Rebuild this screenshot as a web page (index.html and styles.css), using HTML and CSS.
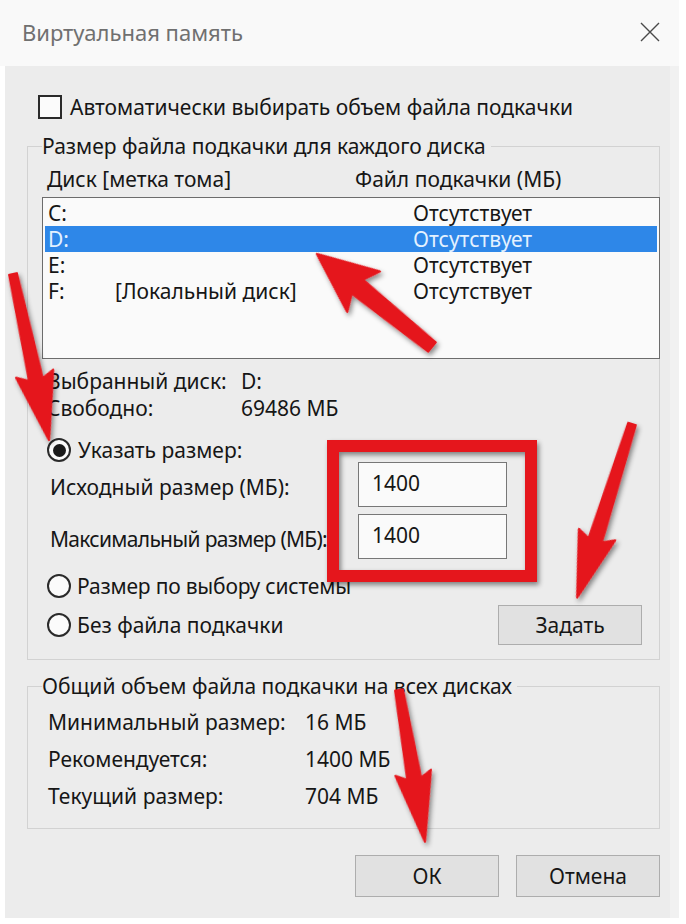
FILE: index.html
```html
<!DOCTYPE html>
<html lang="ru">
<head>
<meta charset="utf-8">
<title>Виртуальная память</title>
<link rel="stylesheet" href="styles.css">
</head>
<body>
<div class="dialog">
  <div class="titlebar">
    <span class="title">Виртуальная память</span>
    <svg class="close" width="20" height="20" viewBox="0 0 20 20"><path d="M1 1 L19 19 M19 1 L1 19" stroke="#4a4a4a" stroke-width="1.4" fill="none"/></svg>
  </div>
  <div class="content">
    <div class="auto"><span class="checkbox"></span><span>Автоматически выбирать объем файла подкачки</span></div>

    <div class="group g1">
      <div class="group-title">Размер файла подкачки для каждого диска</div>
      <div class="headers"><span class="h-disk">Диск [метка тома]</span><span>Файл подкачки (МБ)</span></div>
      <div class="listbox">
        <div class="row"><span class="c-letter">C:</span><span class="c-label"></span><span>Отсутствует</span></div>
        <div class="row selected"><span class="c-letter">D:</span><span class="c-label"></span><span>Отсутствует</span></div>
        <div class="row"><span class="c-letter">E:</span><span class="c-label"></span><span>Отсутствует</span></div>
        <div class="row"><span class="c-letter">F:</span><span class="c-label">[Локальный диск]</span><span>Отсутствует</span></div>
      </div>
      <div class="info">
        <div class="info-row"><span class="info-label">Выбранный диск:</span><span>D:</span></div>
        <div class="info-row"><span class="info-label">Свободно:</span><span>69486 МБ</span></div>
      </div>
      <div class="radio-row r1"><span class="radio on"></span><span>Указать размер:</span></div>
      <div class="field-row f1"><span class="field-label">Исходный размер (МБ):</span><div class="input">1400</div></div>
      <div class="field-row f2"><span class="field-label">Максимальный размер (МБ):</span><div class="input">1400</div></div>
      <div class="radio-row r2"><span class="radio"></span><span>Размер по выбору системы</span></div>
      <div class="radio-row r3"><span class="radio"></span><span class="grow">Без файла подкачки</span><button class="btn set">Задать</button></div>
    </div>

    <div class="group g2">
      <div class="group-title">Общий объем файла подкачки на всех дисках</div>
      <div class="totals">
        <div class="total-row"><span class="total-label">Минимальный размер:</span><span>16 МБ</span></div>
        <div class="total-row"><span class="total-label">Рекомендуется:</span><span>1400 МБ</span></div>
        <div class="total-row"><span class="total-label">Текущий размер:</span><span>704 МБ</span></div>
      </div>
    </div>

    <div class="actions"><button class="btn">ОК</button><button class="btn">Отмена</button></div>
  </div>
</div>

<svg class="annotations" width="686" height="924" viewBox="0 0 686 924">
  <defs>
    <filter id="sh" x="-20%" y="-20%" width="140%" height="140%">
      <feDropShadow dx="2" dy="3" stdDeviation="2.5" flood-color="#000" flood-opacity="0.45"/>
    </filter>
  </defs>
  <g fill="#e5141b" stroke="#e5141b" stroke-width="2" stroke-linejoin="round" filter="url(#sh)">
    <rect x="333" y="446" width="198" height="130" fill="none" stroke-width="12" stroke-linejoin="miter"/>
    <polygon transform="translate(432 347) rotate(-141.04)" points="0,-6 96,-9 88,-26 148,0 88,26 96,9 0,6"/>
    <polygon transform="translate(13 274) rotate(77.76)" points="0,-4 108,-7 102,-19 170,0 102,19 108,7 0,4"/>
    <polygon transform="translate(632 424) rotate(107.54)" points="0,-4 122,-7 116,-19 182,0 116,19 122,7 0,4"/>
    <polygon transform="translate(399 690) rotate(80.29)" points="0,-4 90,-7 84,-18 154,0 84,18 90,7 0,4"/>
  </g>
</svg>
</body>
</html>
```

FILE: styles.css
```css
* { box-sizing: border-box; }
html, body { margin: 0; padding: 0; }
body {
  background: #ffffff;
  width: 686px;
  height: 924px;
  position: relative;
  overflow: hidden;
  font-family: "Noto Sans", "Open Sans", sans-serif;
  font-size: 21px;
  color: #161616;
}
.dialog {
  margin-left: 5px;
  width: 674px;
  height: 918px;
  background: #ececec;
  border-right: 9px solid #f1f1f1;
  display: flex;
  flex-direction: column;
}
.titlebar {
  height: 66px;
  margin-left: -5px;
  margin-right: -9px;
  background: #f9f9f9;
  display: flex;
  align-items: center;
  justify-content: space-between;
  padding: 0 19px 2px 22px;
}
.title {
  color: #707070;
  font-size: 22px;
}
.close { display: block; }
.content {
  padding: 0 10px 0 22px;
  display: flex;
  flex-direction: column;
}
.auto {
  margin-top: 29px;
  height: 24px;
  display: flex;
  align-items: center;
  line-height: 24px;
}
.checkbox {
  width: 24px;
  height: 24px;
  margin-left: 11px;
  margin-right: 8px;
  border: 2px solid #2a2a2a;
  background: #fbfbfb;
  flex: none;
}
.group {
  border: 1px solid #d2d2d2;
  padding: 0 0 0 14px;
  display: flex;
  flex-direction: column;
}
.group-title {
  margin-top: -14px;
  align-self: flex-start;
  background: #ececec;
  line-height: 26px;
  height: 26px;
  padding-right: 5px;
}
.g1 { margin-top: 27px; height: 514px; }
.headers {
  margin-top: 7px;
  height: 26px;
  line-height: 26px;
  padding-left: 5px;
  display: flex;
}
.h-disk { width: 308px; }
.listbox {
  margin-top: 5px;
  margin-right: -1px;
  height: 162px;
  border: 1px solid #6c6c6c;
  background: #fafafa;
  padding: 2px;
}
.row {
  height: 26px;
  line-height: 26px;
  padding-left: 3px;
  display: flex;
}
.row.selected {
  background: #2e87e8;
  color: #e4f1ff;
}
.c-letter { width: 67px; }
.c-label { width: 298px; }
.info { margin-top: 9px; padding-left: 5px; }
.info-row { height: 27px; line-height: 27px; display: flex; }
.info-label { width: 194px; }
.radio-row {
  display: flex;
  align-items: center;
  padding-left: 5px;
}
.radio {
  width: 24px;
  height: 24px;
  border-radius: 50%;
  border: 2px solid #2a2a2a;
  background: #fbfbfb;
  margin-right: 6px;
  flex: none;
  display: flex;
  align-items: center;
  justify-content: center;
}
.radio.on::after {
  content: "";
  width: 13px;
  height: 13px;
  border-radius: 50%;
  background: #1a1a1a;
}
.r1 { margin-top: 16px; height: 24px; }
.r1 .radio { margin-right: 7px; }
.field-row {
  display: flex;
  align-items: center;
  padding-left: 8px;
  height: 45px;
}
.f2 { margin-top: 7px; }
.field-label { width: 308px; padding-top: 4px; white-space: nowrap; }
.f2 .field-label { letter-spacing: -0.7px; }
.input {
  width: 149px;
  height: 45px;
  border: 1px solid #777777;
  background: #fafafa;
  padding-left: 13px;
  line-height: 40px;
}
.r2 { margin-top: 14px; height: 26px; letter-spacing: -0.2px; }
.r3 { margin-top: 6px; height: 40px; }
.grow { flex: 1; }
.btn {
  font-family: inherit;
  font-size: 21px;
  color: #161616;
  background: #e1e1e1;
  border: 1px solid #adadad;
  width: 144px;
  height: 42px;
  padding: 0;
  line-height: 38px;
}
.set { height: 40px; margin-right: 17px; }
.g2 { margin-top: 26px; height: 143px; }
.totals { margin-top: 5px; padding-left: 6px; }
.total-row { height: 37px; line-height: 37px; display: flex; }
.total-label { width: 257px; }
.actions {
  margin-top: 26px;
  display: flex;
  justify-content: flex-end;
  gap: 17px;
}
.annotations {
  position: absolute;
  left: 0;
  top: 0;
  pointer-events: none;
}
```
